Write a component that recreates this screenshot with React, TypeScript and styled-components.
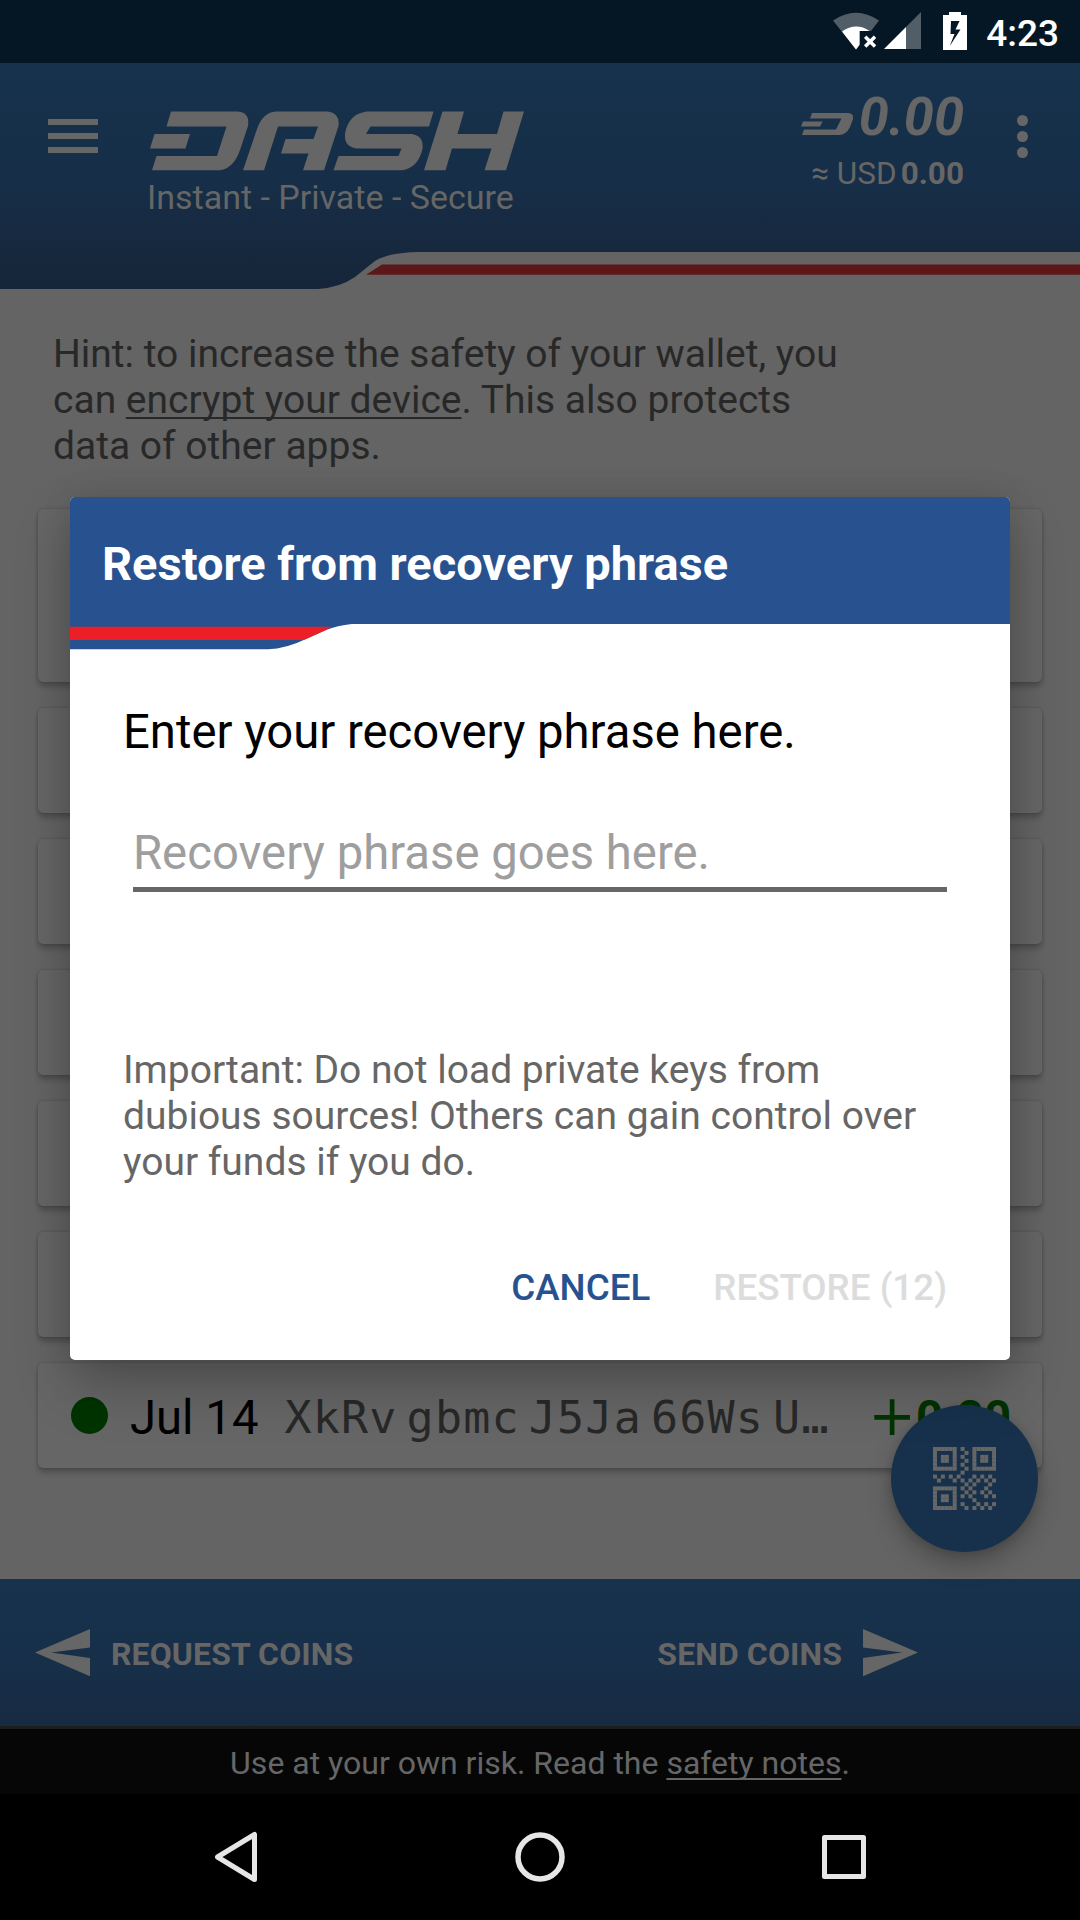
import React from 'react';
import styled, { createGlobalStyle } from 'styled-components';

const INK = '#666666';
const NAVY = '#17314c';
const BLUE = '#28528f';

const GlobalStyle = createGlobalStyle`
  *, *::before, *::after { box-sizing: border-box; }
  html, body { margin: 0; padding: 0; background: #000; }
  body { font-family: Roboto, "Noto Sans", sans-serif; font-size: 39px; overflow: hidden; }
  svg { display: block; flex: none; }
  button { border: 0; padding: 0; margin: 0; background: none; font: inherit; color: inherit; white-space: nowrap; }
`;

const Screen = styled.div`
  position: relative;
  width: 1080px;
  height: 1920px;
  display: flex;
  flex-direction: column;
  background: #646464;
  overflow: hidden;
`;

const StatusBar = styled.div`
  height: 63px;
  flex: none;
  background: #051724;
  display: flex;
  align-items: flex-start;
  justify-content: flex-end;
  padding: 12px 21px 0 0;
`;

const StatusIcon = styled.svg<{ $gap: number }>`
  margin-right: ${p => p.$gap}px;
`;

const Clock = styled.time`
  color: #fff;
  font-size: 37px;
  font-weight: 500;
  line-height: 43px;
`;

const Header = styled.header`
  position: relative;
  height: 226px;
  flex: none;
  display: flex;
  align-items: flex-start;
  padding: 0 52px 0 48px;
`;

const HeaderBackdrop = styled.svg`
  position: absolute;
  inset: 0;
  z-index: 0;
`;

const MenuButton = styled.button`
  position: relative;
  margin-top: 56px;
  width: 50px;
  display: flex;
  flex-direction: column;
  gap: 8.5px;
`;

const MenuLine = styled.span`
  height: 5.5px;
  background: ${INK};
`;

const Brand = styled.div`
  position: relative;
  margin: 48px 0 0 51px;
`;

const Tagline = styled.div`
  margin: 7px 0 0 -2px;
  font-size: 34px;
  line-height: 38px;
  color: ${INK};
  white-space: nowrap;
`;

const Balance = styled.div`
  position: relative;
  margin: 26px 0 0 auto;
  display: flex;
  flex-direction: column;
  align-items: flex-end;
  color: ${INK};
`;

const BalanceRow = styled.div`
  display: flex;
  align-items: flex-start;
  height: 56px;
  font-size: 54px;
  line-height: 56px;
  font-style: italic;
  font-weight: 700;

  svg { margin: 24px 5px 0 0; }
`;

const FiatRow = styled.div`
  margin-top: 11px;
  font-size: 31.5px;
  line-height: 36px;
  white-space: nowrap;

  b { margin-left: 4px; }
`;

const Overflow = styled.button`
  position: relative;
  margin: 52px 0 0 53px;
  display: flex;
  flex-direction: column;
  gap: 5px;
`;

const OverflowDot = styled.span`
  width: 11px;
  height: 11px;
  border-radius: 50%;
  background: ${INK};
`;

const Main = styled.main`
  position: relative;
  flex: 1;
  padding: 42px 38px 0;
`;

const Hint = styled.p`
  margin: 0 0 40px;
  padding-left: 15px;
  height: 138px;
  line-height: 46px;
  color: #282828;
  white-space: nowrap;
`;

const Underlined = styled.a`
  text-decoration: underline;
  text-decoration-thickness: 2px;
  text-underline-offset: 4px;
  text-decoration-skip-ink: none;
`;

const Cards = styled.div`
  display: flex;
  flex-direction: column;
  gap: 26px;
`;

const Card = styled.div<{ $height?: number }>`
  height: ${p => p.$height ?? 105}px;
  display: flex;
  align-items: center;
  padding: 0 31px 0 33px;
  border-radius: 5px;
  background: ${INK};
  box-shadow: 0 5px 5px rgba(0, 0, 0, 0.2), 0 0 3px rgba(0, 0, 0, 0.2);
  font-size: 47.25px;
  line-height: 56px;
  white-space: nowrap;
`;

const Confirmed = styled.span`
  width: 37px;
  height: 37px;
  border-radius: 50%;
  background: #003300;
`;

const TxDate = styled.span`
  margin-left: 22px;
  padding-top: 5px;
  color: #000;
`;

const TxAddress = styled.span`
  margin-left: 26px;
  padding-top: 5px;
  flex: 1;
  font-family: "DejaVu Sans Mono", monospace;
  font-size: 45px;
  letter-spacing: 1.2px;
  word-spacing: -19.3px;
  color: #282828;
`;

const TxAmount = styled.span`
  display: flex;
  align-items: center;
  padding-top: 5px;
  color: #003300;
  font-weight: 700;
`;

const Plus = styled.span`
  margin-top: -6px;
  font-family: "DejaVu Sans", sans-serif;
  font-size: 57px;
  font-weight: 400;
`;

const Fab = styled.button`
  position: absolute;
  right: 42px;
  bottom: 27px;
  width: 147px;
  height: 147px;
  border-radius: 50%;
  background: ${NAVY};
  display: flex;
  align-items: center;
  justify-content: center;
  box-shadow: 0 12px 24px rgba(0, 0, 0, 0.25), 0 2px 8px rgba(0, 0, 0, 0.12);
`;

const ActionBar = styled.nav`
  height: 147px;
  flex: none;
  display: grid;
  grid-template-columns: 1fr 1fr;
  background: linear-gradient(#17324d 0%, #172f49 60%, #172a42 100%);
`;

const Action = styled.button<{ $end?: boolean }>`
  display: flex;
  align-items: flex-start;
  justify-content: ${p => (p.$end ? 'flex-end' : 'flex-start')};
  gap: 21px;
  padding: ${p => (p.$end ? '50px 162px 0 0' : '50px 0 0 35px')};
  color: ${INK};
  font-size: 32px;
  letter-spacing: 0.1px;
  font-weight: 700;
  line-height: 37px;

  span { margin-top: 7px; }
`;

const RiskBar = styled.footer`
  height: 68px;
  flex: none;
  border-top: 3px solid #1d1d1d;
  background: #060606;
  color: ${INK};
  font-size: 32px;
  line-height: 37px;
  padding-top: 15.5px;
  text-align: center;
  white-space: nowrap;
`;

const NavBar = styled.div`
  height: 126px;
  flex: none;
  background: #000;
  display: flex;
  align-items: center;
  justify-content: space-between;
  padding: 0 208px;
`;

const Overlay = styled.div`
  position: absolute;
  inset: 0;
  display: flex;
  justify-content: center;
  align-items: flex-start;
  padding-top: 497px;
`;

const Dialog = styled.section`
  width: 940px;
  height: 863px;
  border-radius: 5px;
  overflow: hidden;
  background: #fff;
  box-shadow: 0 26px 56px rgba(0, 0, 0, 0.24), 0 0 30px rgba(0, 0, 0, 0.1);
  display: flex;
  flex-direction: column;
`;

const DialogTitle = styled.h2`
  margin: 0;
  height: 127px;
  flex: none;
  padding: 39px 32px 0;
  background: ${BLUE};
  color: #fff;
  font-size: 47px;
  font-weight: 700;
  line-height: 56px;
  white-space: nowrap;
`;

const DialogBody = styled.div`
  flex: 1;
  padding: 54px 53px 0;
  display: flex;
  flex-direction: column;
`;

const Prompt = styled.label`
  font-size: 47.25px;
  line-height: 56px;
  color: #000;
  white-space: nowrap;
`;

const PhraseField = styled.div`
  margin: 65px 10px 0;
  height: 67px;
  border-bottom: 5px solid ${INK};
  font-size: 47.25px;
  line-height: 56px;
  color: #9e9e9e;
  white-space: nowrap;
`;

const Warning = styled.p`
  margin: 155px 0 0;
  line-height: 46px;
  color: ${INK};
  white-space: nowrap;
`;

const DialogActions = styled.div`
  margin: 81px 10px 0 0;
  display: flex;
  justify-content: flex-end;
  gap: 63px;
`;

const DialogButton = styled.button<{ $muted?: boolean }>`
  font-size: 36.75px;
  font-weight: 500;
  line-height: 43px;
  color: ${p => (p.$muted ? '#dcdcdc' : BLUE)};
`;

const QR_ROWS = [
  '######.#..######',
  '#....#..#.#....#',
  '#.##.#.#..#.##.#',
  '#.##.#..#.#.##.#',
  '#....#.#..#....#',
  '######..#.######',
  '.......#........',
  '#.#.#.#...#.#.#.',
  '.#...#.#.#.#.#.#',
  '........#.#...#.',
  '######.#.#...#..',
  '#....#..#.#.#.#.',
  '#.##.#.#.#...#.#',
  '#.##.#....#.....',
  '#....#.#...#.#.#',
  '######..#.#.#.#.',
];

const QrIcon = () => (
  <svg width="63" height="63" viewBox="0 0 16 16" fill={INK}>
    {QR_ROWS.flatMap((row, y) =>
      [...row].map((cell, x) =>
        cell === '#' ? <rect key={`${x}-${y}`} x={x} y={y} width="1.02" height="1.02" /> : null
      )
    )}
  </svg>
);

const DashLogo = () => (
  <svg width="376" height="60" viewBox="149 111 376 60" fill={INK} fillRule="evenodd">
    <path d="M171 111.5H238Q250 112.500 248 126L240 150Q234 168 220 170.300H152L156.500 156H217L226.500 126.500H166.500Z" />
    <path d="M154.500 134H190L185.500 148.500H150Z" />
    <path d="M243 170.300L257 129Q263 112 276 111.500H328Q340 113 338.500 126L324 170.300H303L308.500 153.500H281L285.500 139H313.500L318 126.500H278L264 170.300Z" />
    <path d="M433.500 111.500L429 126.500H370.500L366 134H412Q424 136 422.500 149Q418 168 402 170.300H333.500L338.500 156H398.500L401.500 148.500H357Q344 147 345 134Q348 114 367 111.500Z" />
    <path d="M442.500 111.500H464L457.500 134H497L503.500 111.500H524L506 170.300H484.500L491.500 148.500H452L445.500 170.300H424Z" />
  </svg>
);

const DashMark = () => (
  <svg width="53" height="23" viewBox="0 0 53 23" fill={INK}>
    <path d="M11 0H47Q53 .5 52 6L49 14Q45 22 38 22H1L3 16.500H35L40.500 5.500H9Z" />
    <path d="M2 8.500H21.500L19 13.500H0Z" />
  </svg>
);

const WifiIcon = () => (
  <StatusIcon $gap={5} width="46" height="39" viewBox="0 0 46 39">
    <path d="M0 8.500Q23 -7 46 8.500L38 19H27V32L23 37.500Z" fill="#515e68" />
    <path d="M9 19.500Q23 10 36.500 19H26.500V33L23 37.500Z" fill="#fff" />
    <path d="M32.200 24.800L42 34.500M42 24.800L32.200 34.500" stroke="#fff" strokeWidth="3.500" />
  </StatusIcon>
);

const SignalIcon = () => (
  <StatusIcon $gap={22} width="37" height="37" viewBox="0 0 37 37">
    <path d="M22 15L37 0V37H22Z" fill="#515e68" />
    <path d="M0 37L22 15V37Z" fill="#fff" />
  </StatusIcon>
);

const BatteryIcon = () => (
  <StatusIcon $gap={19} width="24" height="38" viewBox="0 0 24 38">
    <path
      d="M6 0H18V3H24V38H0V3H6ZM8 9L7.500 22H11.500L6.800 34L17.500 17.500H12.500L16.500 9Z"
      fill="#fff"
      fillRule="evenodd"
    />
  </StatusIcon>
);

const ArrowIcon = ({ flip }: { flip?: boolean }) => (
  <svg width="55" height="48" viewBox="0 0 55 48" fill={INK}>
    <path
      d="M0 0L55 23.500L0 47.300V29L39 23.500L0 18.500Z"
      transform={flip ? 'matrix(-1 0 0 1 55 0)' : undefined}
    />
  </svg>
);

const Swoosh = () => (
  <svg width="300" height="25.500" viewBox="70 624 300 25.500">
    <path d="M70 623H364Q342 624 326 630L306 639Q286 648.800 268 649.200H70Z" fill={BLUE} />
    <path d="M70 626.700H331L326 630L303.500 640H70Z" fill="#ec1f27" />
  </svg>
);

export default function App() {
  return (
    <>
      <GlobalStyle />
      <Screen>
        <StatusBar>
          <WifiIcon />
          <SignalIcon />
          <BatteryIcon />
          <Clock>4:23</Clock>
        </StatusBar>

        <Header>
          <HeaderBackdrop width="1080" height="226" viewBox="0 63 1080 226">
            <defs>
              <linearGradient id="bar" x1="0" y1="0" x2="0" y2="1">
                <stop offset="0" stopColor="#17324d" />
                <stop offset="0.55" stopColor="#162e47" />
                <stop offset="1" stopColor="#162539" />
              </linearGradient>
            </defs>
            <path
              d="M0 63H1080V252H420Q388 252.500 375 261L355 277Q340 287.500 318 289H0Z"
              fill="url(#bar)"
            />
            <path d="M382 264.500H1080V274.700H366Z" fill="#5e1718" />
          </HeaderBackdrop>
          <MenuButton aria-label="Menu">
            <MenuLine />
            <MenuLine />
            <MenuLine />
          </MenuButton>
          <Brand>
            <DashLogo />
            <Tagline>Instant - Private - Secure</Tagline>
          </Brand>
          <Balance>
            <BalanceRow>
              <DashMark />
              0.00
            </BalanceRow>
            <FiatRow>
              ≈ USD<b>0.00</b>
            </FiatRow>
          </Balance>
          <Overflow aria-label="More">
            <OverflowDot />
            <OverflowDot />
            <OverflowDot />
          </Overflow>
        </Header>

        <Main>
          <Hint>
            Hint: to increase the safety of your wallet, you
            <br />
            can <Underlined>encrypt your device</Underlined>. This also protects
            <br />
            data of other apps.
          </Hint>
          <Cards>
            <Card $height={173} />
            <Card />
            <Card />
            <Card />
            <Card />
            <Card />
            <Card>
              <Confirmed />
              <TxDate>Jul 14</TxDate>
              <TxAddress>XkRv gbmc J5Ja 66Ws U…</TxAddress>
              <TxAmount>
                <Plus>+</Plus>0.20
              </TxAmount>
            </Card>
          </Cards>
          <Fab aria-label="Scan">
            <QrIcon />
          </Fab>
        </Main>

        <ActionBar>
          <Action>
            <ArrowIcon flip />
            <span>REQUEST COINS</span>
          </Action>
          <Action $end>
            <span>SEND COINS</span>
            <ArrowIcon />
          </Action>
        </ActionBar>

        <RiskBar>
          Use at your own risk. Read the <Underlined>safety notes</Underlined>.
        </RiskBar>

        <NavBar>
          <svg width="56" height="56" viewBox="208 1829 56 56">
            <path
              d="M217.500 1857L254.500 1834.500V1879.500Z"
              fill="none"
              stroke="#e6e6e6"
              strokeWidth="5"
              strokeLinejoin="round"
            />
          </svg>
          <svg width="56" height="56" viewBox="0 0 56 56">
            <circle cx="28" cy="28" r="22" fill="none" stroke="#e6e6e6" strokeWidth="5.500" />
          </svg>
          <svg width="56" height="56" viewBox="0 0 56 56">
            <rect
              x="8.500"
              y="8.500"
              width="39"
              height="39"
              fill="none"
              stroke="#e6e6e6"
              strokeWidth="5"
              strokeLinejoin="round"
            />
          </svg>
        </NavBar>

        <Overlay>
          <Dialog role="dialog">
            <DialogTitle>Restore from recovery phrase</DialogTitle>
            <Swoosh />
            <DialogBody>
              <Prompt>Enter your recovery phrase here.</Prompt>
              <PhraseField>Recovery phrase goes here.</PhraseField>
              <Warning>
                Important: Do not load private keys from
                <br />
                dubious sources! Others can gain control over
                <br />
                your funds if you do.
              </Warning>
              <DialogActions>
                <DialogButton>CANCEL</DialogButton>
                <DialogButton $muted disabled>
                  RESTORE (12)
                </DialogButton>
              </DialogActions>
            </DialogBody>
          </Dialog>
        </Overlay>
      </Screen>
    </>
  );
}
